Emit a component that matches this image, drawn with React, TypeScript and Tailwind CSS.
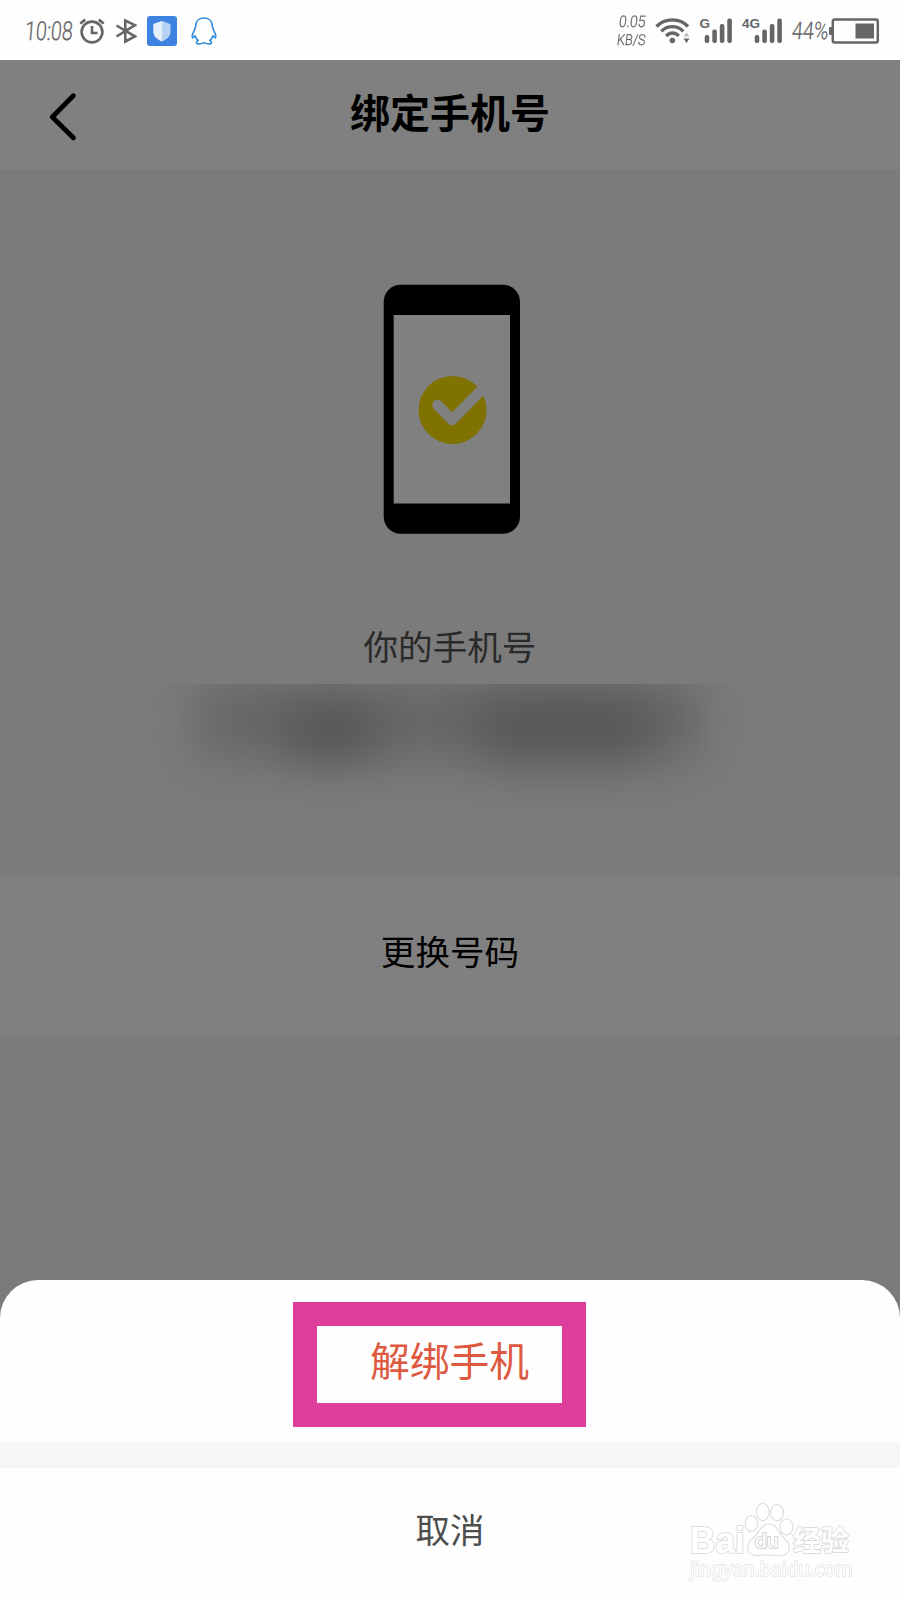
import React from 'react';

const SignalBars: React.FC<{ label: string }> = ({ label }) => (
  <div className="relative h-[26px] w-[32px]">
    <span className="absolute -top-[2px] right-[22px] whitespace-nowrap font-['Liberation_Sans'] text-[13.5px] font-bold leading-[16px] text-[#666]">
      {label}
    </span>
    <svg className="h-[26px] w-[32px]" viewBox="0 0 32 26" fill="#666">
      <rect x="4.7" y="17" width="4.6" height="8" rx="2" />
      <rect x="12.3" y="11.5" width="4.6" height="13.5" rx="2" />
      <rect x="19.8" y="6" width="4.6" height="19" rx="2" />
      <rect x="27.3" y="0.5" width="4.6" height="24.5" rx="2" />
    </svg>
  </div>
);

const StatusBar: React.FC = () => (
  <div className="flex h-[60px] items-center bg-[#fefefe] pt-[2px] font-['Roboto'] text-[#666]">
    <div className="ml-[25px] w-[47px]">
      <span className="block w-[62px] origin-left scale-x-[0.76] -skew-x-6 whitespace-nowrap text-[26px] font-light leading-[30px] [-webkit-text-stroke:0.3px_#666]">
        10:08
      </span>
    </div>
    <svg className="ml-[7px] h-[26px] w-[26px]" viewBox="0 0 26 26" fill="none" stroke="#666" strokeWidth="2.6">
      <circle cx="13" cy="14" r="10.4" />
      <path d="M13 8v7h5.5" />
      <path d="M1.3 5.5 6.2 1.6M24.7 5.5 19.8 1.6" strokeWidth="2.8" />
    </svg>
    <svg className="ml-[10px] h-[26px] w-[22px]" viewBox="0 0 22 26" fill="none" stroke="#666" strokeWidth="2.6">
      <path d="M1.500 7.500 20 18.300 10.300 23.500V2.500L20 7.200 1.500 18.500" />
    </svg>
    <svg className="ml-[10px] h-[30px] w-[30px]" viewBox="0 0 30 30">
      <rect width="30" height="30" rx="3" fill="#3e82e2" />
      <path d="M15 5 23.500 8v8c0 4.500-4 7.500-8.500 9.500-4.500-2-8.500-5-8.500-9.500V8z" fill="#b9d3f6" />
      <path d="M15 5v20.500c-4.500-2-8.500-5-8.500-9.500V8z" fill="#e4effc" />
    </svg>
    <svg className="ml-[14px] h-[28px] w-[26px]" viewBox="0 0 26 28" fill="none" stroke="#2f8bdc" strokeWidth="1.600" strokeLinejoin="round">
      <path d="M13 1C7.500 1 4.500 5 4.500 10.200 4.200 12.500 1.200 16 1.200 19.500c0 1.700 1.200 1.500 3-.7.400 2 1.600 3.700 3 4.700-2 .8-2.400 3.400 0 3.400 2.300 0 4-.2 5.800-1.300 1.800 1.100 3.500 1.300 5.800 1.300 2.400 0 2-2.600 0-3.400 1.400-1 2.600-2.700 3-4.700 1.800 2.200 3 2.400 3 .7 0-3.500-3-7-3.300-9.300C21.500 5 18.500 1 13 1z" />
    </svg>

    <div className="ml-[401px] w-[28px] -skew-x-6">
      <div className="origin-left scale-x-[0.87] whitespace-nowrap text-[16px] font-light leading-[18px] [-webkit-text-stroke:0.3px_#666]">0.05</div>
      <div className="origin-left scale-x-[0.85] whitespace-nowrap text-[15px] font-light leading-[18px] [-webkit-text-stroke:0.3px_#666]">KB/S</div>
    </div>
    <svg className="ml-[9px] h-[26px] w-[35px]" viewBox="0 0 35 26" fill="none" stroke="#666" strokeWidth="3.400">
      <path d="M1.500 8.500C10-.3 25-.3 33 8.500M6.300 13.300c6-6.300 16-6.300 22 0M11.200 18c3.600-4 9-4 12.500 0" />
      <circle cx="17.300" cy="22.500" r="2.800" fill="#666" stroke="none" />
      <path d="m28.500 20.500 3 4.500 3-4.500z" fill="#666" stroke="none" />
      <path d="m28.500 18.500 3-4 3 4z" fill="#bbb" stroke="none" />
    </svg>
    <div className="ml-[10px]">
      <SignalBars label="G" />
    </div>
    <div className="ml-[18px]">
      <SignalBars label="4G" />
    </div>
    <div className="ml-[10px] w-[37px]">
      <span className="block w-[50px] origin-left scale-x-[0.82] -skew-x-6 whitespace-nowrap text-[24px] font-light leading-[30px] [-webkit-text-stroke:0.3px_#666]">
        44%
      </span>
    </div>
    <svg className="h-[26px] w-[51px]" viewBox="0 0 51 26">
      <rect x="3.800" y="1.500" width="45" height="23" rx="2" fill="none" stroke="#666" strokeWidth="2.500" />
      <rect x="0" y="9" width="4" height="8" rx="1" fill="#666" />
      <rect x="26.500" y="5.500" width="18.500" height="15" fill="#666" />
    </svg>
  </div>
);

const Header: React.FC = () => (
  <header className="flex h-[110px] items-center bg-[#808080] pl-[49px]">
    <svg className="mt-[3px] h-[48px] w-[28px]" viewBox="0 0 28 48" fill="none" stroke="#000" strokeWidth="4.800" strokeLinecap="round" strokeLinejoin="round">
      <path d="M24.300 2.800 3.300 24 24.300 44.800" />
    </svg>
    <h1 className="mb-[8px] ml-[273px] text-[40px] font-bold leading-[58px] text-black">绑定手机号</h1>
  </header>
);

const PhoneIcon: React.FC = () => (
  <svg className="h-[250px] w-[138px]" viewBox="0 0 138 250">
    <rect x="0.700" y="0.700" width="136.300" height="249" rx="17" fill="#000" />
    <rect x="10.700" y="31" width="116.300" height="188.500" fill="#808080" />
    <circle cx="69.500" cy="126" r="34" fill="#807200" />
    <path d="M54.500 121 69 136 103 101.500" fill="none" stroke="#808080" strokeWidth="10.500" strokeLinecap="round" strokeLinejoin="round" />
  </svg>
);

const BoundNumber: React.FC = () => (
  <section className="flex h-[705px] flex-col items-center bg-[#7b7b7b] pt-[114px]">
    <div className="ml-[4px]">
      <PhoneIcon />
    </div>
    <p className="mt-[86px] text-[34.600px] leading-[50px] text-[#2a2a2a]">你的手机号</p>
    {/* hidden number */}
    <div className="relative mt-[14px] h-[136px] w-[620px] overflow-hidden">
      <div className="absolute -top-[2px] left-[56px] h-[76px] w-[505px] bg-[#666] blur-[24px]" />
      <div className="absolute left-[140px] top-[20px] h-[56px] w-[100px] rounded-full bg-[#4c4c4c] opacity-60 blur-[22px]" />
      <div className="absolute left-[335px] top-[16px] h-[58px] w-[180px] rounded-full bg-[#484848] opacity-60 blur-[26px]" />
    </div>
  </section>
);

const Watermark: React.FC = () => (
  <div className="absolute left-[689px] top-[34px] h-[80px] w-[170px] text-white">
    <div className="absolute left-[1px] top-[21px] origin-left scale-x-[0.95] font-['Liberation_Sans'] text-[37px] font-bold leading-[36px] [-webkit-text-stroke:2px_#dedede] [paint-order:stroke_fill]">
      Bai
    </div>
    <svg className="absolute left-[55px] top-0 h-[56px] w-[50px]" viewBox="0 0 50 56" fill="#fff" stroke="#dedede" strokeWidth="1.200">
      <ellipse cx="7.300" cy="21.500" rx="6.300" ry="8" />
      <ellipse cx="18.700" cy="10" rx="6.300" ry="8.700" />
      <ellipse cx="33" cy="10.700" rx="6.500" ry="8" />
      <ellipse cx="42.500" cy="25" rx="6.500" ry="8" />
      <path d="M25 22c-7 0-9 7-13 11-5 5-9 8-8 14 1 6 7 7 12 6.500 6-1 10-1 16 0 5 .8 12 0 13-6.500 1-6-3-9-7-13-4-5-6-12-13-12z" />
    </svg>
    <div className="absolute left-[66px] top-[29px] font-['Liberation_Sans'] text-[21px] leading-[20px] [-webkit-text-stroke:2px_#d4d4d4] [paint-order:stroke_fill]">
      du
    </div>
    <div className="absolute left-[104px] top-[23px] whitespace-nowrap text-[28px] font-bold leading-[28px] [-webkit-text-stroke:1.600px_#d8d8d8] [paint-order:stroke_fill]">
      经验
    </div>
    <div className="absolute left-[1px] top-[57px] origin-left scale-x-[0.94] whitespace-nowrap font-['Noto_Sans'] text-[20px] leading-[20px] [-webkit-text-stroke:1.500px_#e2e2e2] [paint-order:stroke_fill]">
      jingyan.baidu.com
    </div>
  </div>
);

const ActionSheet: React.FC = () => (
  <div className="h-[320px] bg-[#7b7b7b]">
    <div className="h-full rounded-t-[38px] bg-[#fefefe]">
      <div className="flex h-[162px] pl-[293px] pt-[22px]">
        <button className="h-[125px] w-[293px] whitespace-nowrap border-[24px] border-[#df3d9b] pb-[12px] pl-[20px] text-[39.800px] leading-[58px] text-[#dd5a40]">
          解绑手机
        </button>
      </div>
      <div className="h-[26px] bg-[#f6f6f6]" />
      <div className="relative flex h-[132px] justify-center pt-[35px]">
        <button className="h-[50px] text-[34.500px] leading-[50px] text-[#4d4d4d]">取消</button>
        <Watermark />
      </div>
    </div>
  </div>
);

const App: React.FC = () => {
  return (
    <div className="h-[1600px] w-[900px] overflow-hidden bg-[#7b7b7b] font-['Noto_Sans_CJK_SC',sans-serif]">
      <StatusBar />
      <Header />
      <BoundNumber />
      <div className="flex h-[162px] justify-center bg-[#808080] pt-[50px]">
        <button className="h-[50px] text-[34.600px] leading-[50px] text-black">更换号码</button>
      </div>
      <div className="h-[243px] bg-[#7b7b7b]" />
      <ActionSheet />
    </div>
  );
};

export default App;
